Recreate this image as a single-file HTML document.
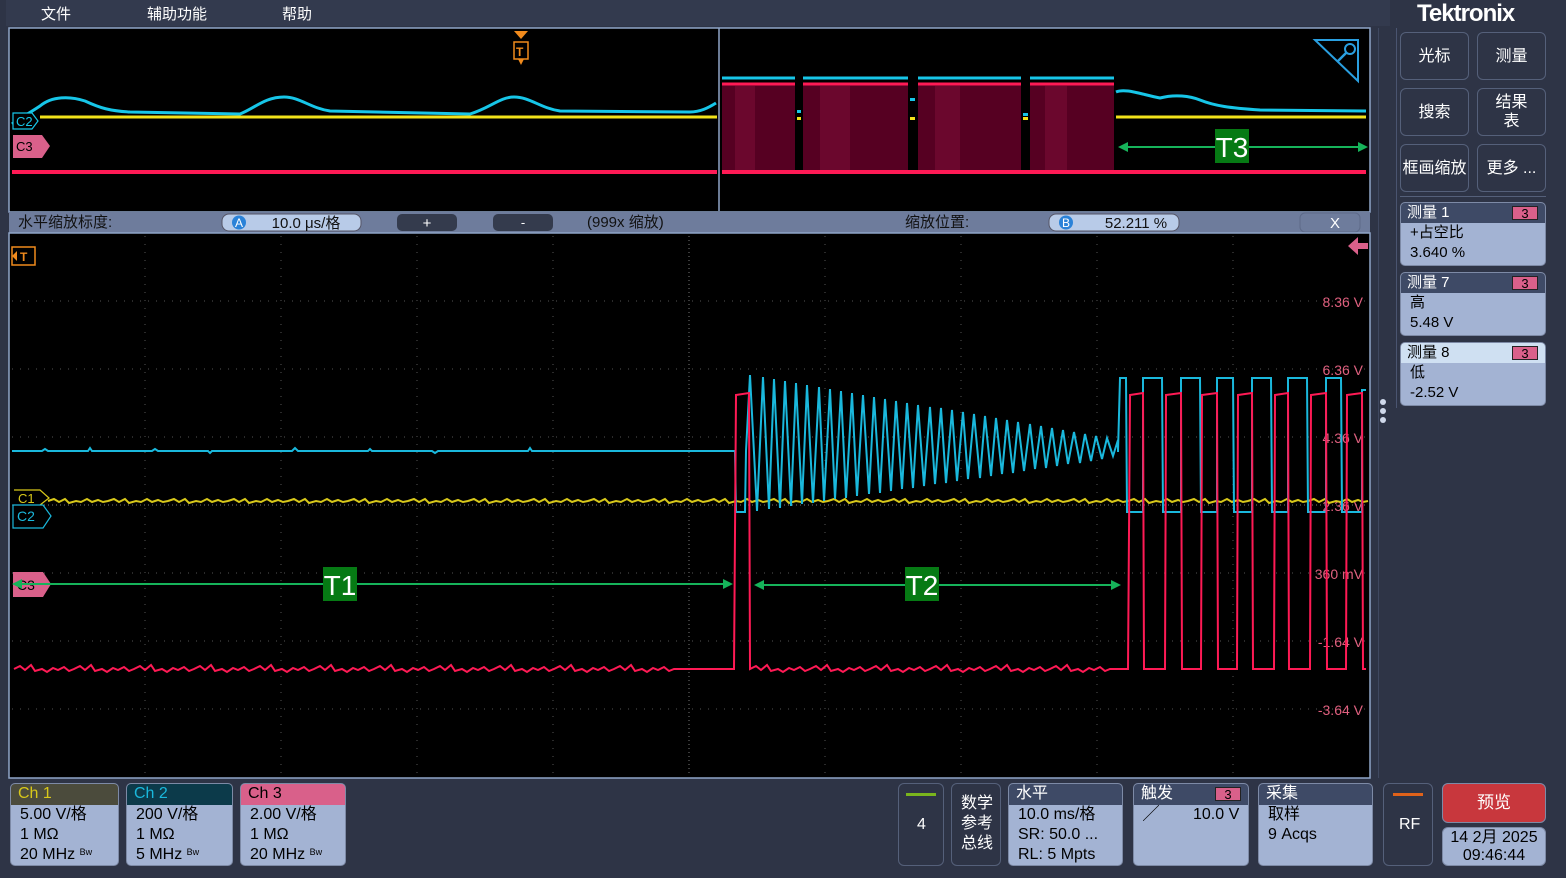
<!DOCTYPE html>
<html><head><meta charset="utf-8"><style>
*{margin:0;padding:0;box-sizing:border-box}
body{width:1566px;height:878px;background:#2e3446;font-family:"Liberation Sans","Noto Sans CJK SC",sans-serif;position:relative;overflow:hidden;color:#fff}
.a{position:absolute}
.menu{font-size:15px;color:#fff;top:3px}
.btn{position:absolute;border:1px solid #55607a;border-radius:6px;background:#2e3446;color:#fff;font-size:16px;display:flex;align-items:center;justify-content:center;text-align:center;line-height:19px}
.card{position:absolute;border:1px solid #7d8aa6;border-radius:5px;background:#a3b3d3;color:#000;overflow:hidden;font-size:15px;line-height:20px}
.card .h{background:#3e4a66;color:#fff;height:20px;padding-left:6px;position:relative}
.badge{position:absolute;right:7px;top:3px;width:26px;height:14px;background:#d9608a;border:1px solid #222;color:#000;font-size:13px;line-height:13px;text-align:center}
.ch{position:absolute;top:783px;height:83px;border:1px solid #7d8aa6;border-radius:5px;background:#a3b3d3;color:#000;font-size:16px;line-height:20px;overflow:hidden}
.ch .h{height:21px;padding-left:7px}
.ch .b{padding-left:9px}
.bw{font-size:9px;line-height:0;vertical-align:4px}
.bb{position:absolute;top:783px;height:83px;border:1px solid #55607a;border-radius:6px;background:#2e3446}
.vl{font-size:14px;fill:#e0607f;text-anchor:end;font-family:"Liberation Sans",sans-serif}
</style></head><body>
<div class="a" style="left:6px;top:0;width:1384px;height:26px;background:#333a4e"></div>
<div class="a menu" style="left:41px">文件</div>
<div class="a menu" style="left:147px">辅助功能</div>
<div class="a menu" style="left:282px">帮助</div>

<svg class="a" style="left:0;top:0" width="1390" height="780" viewBox="0 0 1390 780">
<rect x="9" y="28" width="1361" height="184" fill="#000" stroke="#8fa5c8" stroke-width="1.5"/>
<line x1="719" y1="28" x2="719" y2="211" stroke="#8fa5c8" stroke-width="1.5"/>
<g fill="#560022">
<rect x="722" y="84" width="73" height="88"/><rect x="803" y="84" width="105" height="88"/><rect x="918" y="84" width="103" height="88"/><rect x="1030" y="84" width="84" height="88"/>
</g>
<g fill="#7a0b35" opacity=".6"><rect x="735" y="86" width="20" height="84"/><rect x="820" y="86" width="30" height="84"/><rect x="935" y="86" width="25" height="84"/><rect x="1045" y="86" width="22" height="84"/></g>
<g stroke="#ff1a55" stroke-width="3"><line x1="722" y1="84" x2="795" y2="84"/><line x1="803" y1="84" x2="908" y2="84"/><line x1="918" y1="84" x2="1021" y2="84"/><line x1="1030" y1="84" x2="1114" y2="84"/></g>
<g stroke="#17c6e8" stroke-width="3"><line x1="722" y1="78" x2="795" y2="78"/><line x1="803" y1="78" x2="908" y2="78"/><line x1="918" y1="78" x2="1021" y2="78"/><line x1="1030" y1="78" x2="1114" y2="78"/></g>
<g fill="#17c6e8"><rect x="797" y="110" width="4" height="3"/><rect x="910" y="98" width="5" height="3"/><rect x="1023" y="113" width="5" height="3"/></g>
<g fill="#f2e21a"><rect x="797" y="117" width="4" height="3"/><rect x="910" y="117" width="5" height="3"/><rect x="1023" y="117" width="5" height="3"/></g>
<path d="M12 124 C20 118 28 114 40 106 C52 96 70 96 85 101 C100 108 110 111 130 112 L240 114 C255 108 265 97 284 97 C300 97 310 108 330 111 L470 114 C490 108 500 97 514 97 C530 97 540 108 560 111 L690 112 C700 112 708 108 716 103" stroke="#17c6e8" stroke-width="3" fill="none"/>
<path d="M1116 92 C1125 88 1140 94 1160 98 C1175 94 1190 96 1200 100 C1215 106 1230 108 1260 110 L1366 111" stroke="#17c6e8" stroke-width="3" fill="none"/>
<line x1="40" y1="117" x2="717" y2="117" stroke="#f2e21a" stroke-width="3"/>
<line x1="1116" y1="117" x2="1366" y2="117" stroke="#f2e21a" stroke-width="3"/>
<line x1="12" y1="172" x2="717" y2="172" stroke="#ff1a55" stroke-width="4"/>
<line x1="722" y1="172" x2="1366" y2="172" stroke="#ff1a55" stroke-width="4"/>
<path d="M13 113 L32 113 L38 121 L32 129 L13 129 Z" fill="#000" stroke="#17c6e8" stroke-width="1.2"/>
<text x="16" y="126" font-size="13" fill="#17c6e8">C2</text>
<path d="M13 135 L42 135 L50 146 L42 158 L13 158 Z" fill="#d9608a"/>
<text x="16" y="151" font-size="13" fill="#000">C3</text>
<path d="M514 31 L528 31 L521 39 Z" fill="#f08a1c"/>
<rect x="514" y="42" width="14" height="17" fill="none" stroke="#f08a1c" stroke-width="1.5"/>
<path d="M518 59 L521 65 L524 59" fill="#f08a1c"/>
<text x="516" y="56" font-size="12" fill="#f08a1c" font-weight="bold">T</text>
<path d="M1315 40 L1358 40 L1358 81 Z" fill="none" stroke="#2a9fe0" stroke-width="2"/>
<circle cx="1350" cy="49" r="5" fill="none" stroke="#2a9fe0" stroke-width="2"/><line x1="1346" y1="53" x2="1337" y2="62" stroke="#2a9fe0" stroke-width="2.5"/>
<line x1="1120" y1="147" x2="1366" y2="147" stroke="#16b35a" stroke-width="2"/>
<path d="M1118 147 L1128 142 L1128 152Z M1368 147 L1358 142 L1358 152Z" fill="#16b35a"/>
<rect x="1215" y="129" width="34" height="34" fill="#067a14"/>
<text x="1232" y="157" font-size="28" fill="#fff" text-anchor="middle">T3</text>

<rect x="9" y="212" width="1361" height="21" fill="#6e7c9c"/>
<text x="18" y="227" font-size="15" fill="#111">水平缩放标度:</text>
<rect x="222" y="214" width="139" height="17" rx="7" fill="#b8cbe8" stroke="#556"/>
<circle cx="239" cy="222.5" r="7" fill="#2a82d8"/><text x="239" y="227" font-size="12" fill="#fff" text-anchor="middle">A</text>
<text x="306" y="228" font-size="15" fill="#111" text-anchor="middle">10.0 μs/格</text>
<rect x="397" y="214" width="60" height="17" rx="5" fill="#343b4d"/><text x="427" y="228" font-size="15" fill="#fff" text-anchor="middle">+</text>
<rect x="493" y="214" width="60" height="17" rx="5" fill="#343b4d"/><text x="523" y="227" font-size="13" fill="#fff" text-anchor="middle">-</text>
<text x="587" y="227" font-size="15" fill="#111">(999x 缩放)</text>
<text x="905" y="227" font-size="15" fill="#111">缩放位置:</text>
<rect x="1049" y="214" width="130" height="17" rx="7" fill="#b8cbe8" stroke="#556"/>
<circle cx="1066" cy="222.5" r="7" fill="#2a82d8"/><text x="1066" y="227" font-size="12" fill="#fff" text-anchor="middle">B</text>
<text x="1136" y="228" font-size="15" fill="#111" text-anchor="middle">52.211 %</text>
<rect x="1300" y="213" width="60" height="19" rx="5" fill="none" stroke="#5d6a88"/><text x="1335" y="228" font-size="15" fill="#fff" text-anchor="middle">X</text>

<rect x="9" y="233" width="1361" height="545" fill="#000" stroke="#8fa5c8" stroke-width="1.5"/>
<g stroke="#555" stroke-width="1" stroke-dasharray="1 7">
<line x1="145" y1="236" x2="145" y2="776"/><line x1="281" y1="236" x2="281" y2="776"/><line x1="417" y1="236" x2="417" y2="776"/><line x1="553" y1="236" x2="553" y2="776"/><line x1="825" y1="236" x2="825" y2="776"/><line x1="961" y1="236" x2="961" y2="776"/><line x1="1097" y1="236" x2="1097" y2="776"/><line x1="1233" y1="236" x2="1233" y2="776"/>
<line x1="12" y1="301" x2="1368" y2="301"/><line x1="12" y1="369" x2="1368" y2="369"/><line x1="12" y1="437" x2="1368" y2="437"/><line x1="12" y1="573" x2="1368" y2="573"/><line x1="12" y1="641" x2="1368" y2="641"/><line x1="12" y1="709" x2="1368" y2="709"/>
</g>
<g stroke="#777" stroke-width="1" stroke-dasharray="1 3"><line x1="689" y1="236" x2="689" y2="776"/><line x1="12" y1="505" x2="1368" y2="505"/></g>
<text class="vl" x="1363" y="307">8.36 V</text><text class="vl" x="1363" y="375">6.36 V</text><text class="vl" x="1363" y="443">4.36 V</text><text class="vl" x="1363" y="511">2.36 V</text><text class="vl" x="1363" y="579">360 mV</text><text class="vl" x="1363" y="647">-1.64 V</text><text class="vl" x="1363" y="715">-3.64 V</text>

<path d="M48 501 l6,-2 l5,3 l6,-3 l4,4 l7,-2 l5,1 l6,-3 l5,3 l6,-2 l5,2 l5,-1 M108 501 l6,-2 l5,3 l6,-3 l4,4 l7,-2 l5,1 l6,-3 l5,3 l6,-2 l5,2 l5,-1 M168 501 l6,-2 l5,3 l6,-3 l4,4 l7,-2 l5,1 l6,-3 l5,3 l6,-2 l5,2 l5,-1 M228 501 l6,-2 l5,3 l6,-3 l4,4 l7,-2 l5,1 l6,-3 l5,3 l6,-2 l5,2 l5,-1 M288 501 l6,-2 l5,3 l6,-3 l4,4 l7,-2 l5,1 l6,-3 l5,3 l6,-2 l5,2 l5,-1 M348 501 l6,-2 l5,3 l6,-3 l4,4 l7,-2 l5,1 l6,-3 l5,3 l6,-2 l5,2 l5,-1 M408 501 l6,-2 l5,3 l6,-3 l4,4 l7,-2 l5,1 l6,-3 l5,3 l6,-2 l5,2 l5,-1 M468 501 l6,-2 l5,3 l6,-3 l4,4 l7,-2 l5,1 l6,-3 l5,3 l6,-2 l5,2 l5,-1 M528 501 l6,-2 l5,3 l6,-3 l4,4 l7,-2 l5,1 l6,-3 l5,3 l6,-2 l5,2 l5,-1 M588 501 l6,-2 l5,3 l6,-3 l4,4 l7,-2 l5,1 l6,-3 l5,3 l6,-2 l5,2 l5,-1 M648 501 l6,-2 l5,3 l6,-3 l4,4 l7,-2 l5,1 l6,-3 l5,3 l6,-2 l5,2 l5,-1 M708 501 l6,-2 l5,3 l6,-3 l4,4 l7,-2 l5,1 l6,-3 l5,3 l6,-2 l5,2 l5,-1 M768 501 l6,-2 l5,3 l6,-3 l4,4 l7,-2 l5,1 l6,-3 l5,3 l6,-2 l5,2 l5,-1 M828 501 l6,-2 l5,3 l6,-3 l4,4 l7,-2 l5,1 l6,-3 l5,3 l6,-2 l5,2 l5,-1 M888 501 l6,-2 l5,3 l6,-3 l4,4 l7,-2 l5,1 l6,-3 l5,3 l6,-2 l5,2 l5,-1 M948 501 l6,-2 l5,3 l6,-3 l4,4 l7,-2 l5,1 l6,-3 l5,3 l6,-2 l5,2 l5,-1 M1008 501 l6,-2 l5,3 l6,-3 l4,4 l7,-2 l5,1 l6,-3 l5,3 l6,-2 l5,2 l5,-1 M1068 501 l6,-2 l5,3 l6,-3 l4,4 l7,-2 l5,1 l6,-3 l5,3 l6,-2 l5,2 l5,-1 M1128 501 l6,-2 l5,3 l6,-3 l4,4 l7,-2 l5,1 l6,-3 l5,3 l6,-2 l5,2 l5,-1 M1188 501 l6,-2 l5,3 l6,-3 l4,4 l7,-2 l5,1 l6,-3 l5,3 l6,-2 l5,2 l5,-1 M1248 501 l6,-2 l5,3 l6,-3 l4,4 l7,-2 l5,1 l6,-3 l5,3 l6,-2 l5,2 l5,-1 M1308 501 l6,-2 l5,3 l6,-3 l4,4 l7,-2 l5,1 l6,-3 l5,3 l6,-2 l5,2 l5,-1" stroke="#d8c81a" stroke-width="2" fill="none"/>
<path d="M12 451 l30,0 l3,-2 l3,2 l40,0 l2,-3 l2,3 l60,0 l3,-2 l3,2 l50,0 l2,2 l2,-2 l80,0 l3,-3 l3,3 l70,0 l2,-2 l2,2 l60,0 l3,2 l3,-2 l90,0 l2,-3 l2,3 l100,0 L733 451 L735 451 L736 512 L745 512 L746 451 L750 375 L757 511 L763 377 L769 509 L774 379 L780 508 L785 381 L791 506 L796 383 L802 504 L807 385 L813 503 L819 387 L824 501 L830 389 L835 499 L841 391 L846 498 L852 393 L857 496 L863 395 L869 494 L874 397 L880 493 L885 399 L891 491 L896 401 L902 489 L907 403 L913 488 L918 405 L924 486 L930 407 L935 484 L941 408 L946 483 L952 410 L957 481 L963 412 L968 479 L974 414 L980 478 L985 416 L991 476 L996 418 L1002 474 L1007 420 L1013 473 L1018 422 L1024 471 L1030 424 L1035 469 L1041 426 L1046 468 L1052 428 L1057 466 L1063 430 L1068 464 L1074 432 L1080 463 L1085 434 L1091 461 L1096 436 L1102 459 L1107 438 L1113 456 L1118 440 L1118 452 L1120 378 L1126 378 L1127 512 L1143 512 L1143 378 L1162 378 L1163 512 L1181 512 L1181 378 L1200 378 L1201 512 L1217 512 L1217 378 L1233 378 L1234 512 L1252 512 L1252 378 L1271 378 L1272 512 L1288 512 L1288 378 L1307 378 L1308 512 L1326 512 L1326 378 L1341 378 L1342 512 L1362 512 L1362 390 L1366 390" stroke="#1ab8dc" stroke-width="2" fill="none"/>
<path d="M14 669 l6,-3 l5,4 l6,-5 l4,6 l7,-2 l5,3 l6,-4 l5,2 l6,-3 l5,4 l5,-2 l6,-3 l5,4 l6,-5 l4,6 l7,-2 l5,3 l6,-4 l5,2 l6,-3 l5,4 l5,-2 l6,-3 l5,4 l6,-5 l4,6 l7,-2 l5,3 l6,-4 l5,2 l6,-3 l5,4 l5,-2 l6,-3 l5,4 l6,-5 l4,6 l7,-2 l5,3 l6,-4 l5,2 l6,-3 l5,4 l5,-2 l6,-3 l5,4 l6,-5 l4,6 l7,-2 l5,3 l6,-4 l5,2 l6,-3 l5,4 l5,-2 l6,-3 l5,4 l6,-5 l4,6 l7,-2 l5,3 l6,-4 l5,2 l6,-3 l5,4 l5,-2 l6,-3 l5,4 l6,-5 l4,6 l7,-2 l5,3 l6,-4 l5,2 l6,-3 l5,4 l5,-2 l6,-3 l5,4 l6,-5 l4,6 l7,-2 l5,3 l6,-4 l5,2 l6,-3 l5,4 l5,-2 l6,-3 l5,4 l6,-5 l4,6 l7,-2 l5,3 l6,-4 l5,2 l6,-3 l5,4 l5,-2 l6,-3 l5,4 l6,-5 l4,6 l7,-2 l5,3 l6,-4 l5,2 l6,-3 l5,4 l5,-2 l6,-3 l5,4 l6,-5 l4,6 l7,-2 l5,3 l6,-4 l5,2 l6,-3 l5,4 l5,-2 L734 669 L736 395 L749 393 L750 669 l6,-3 l5,4 l6,-5 l4,6 l7,-2 l5,3 l6,-4 l5,2 l6,-3 l5,4 l5,-2 l6,-3 l5,4 l6,-5 l4,6 l7,-2 l5,3 l6,-4 l5,2 l6,-3 l5,4 l5,-2 l6,-3 l5,4 l6,-5 l4,6 l7,-2 l5,3 l6,-4 l5,2 l6,-3 l5,4 l5,-2 l6,-3 l5,4 l6,-5 l4,6 l7,-2 l5,3 l6,-4 l5,2 l6,-3 l5,4 l5,-2 l6,-3 l5,4 l6,-5 l4,6 l7,-2 l5,3 l6,-4 l5,2 l6,-3 l5,4 l5,-2 l6,-3 l5,4 l6,-5 l4,6 l7,-2 l5,3 l6,-4 l5,2 l6,-3 l5,4 l5,-2 L1128 669 L1130 395 L1143 393 L1144 669 L1165 669 L1166 395 L1181 393 L1182 669 L1201 669 L1202 395 L1217 393 L1218 669 L1237 669 L1238 395 L1252 393 L1253 669 L1274 669 L1275 395 L1288 393 L1289 669 L1310 669 L1311 395 L1326 393 L1327 669 L1346 669 L1347 395 L1362 393 L1363 669 L1366 669" stroke="#ff1a55" stroke-width="2" fill="none"/>
<rect x="12" y="247" width="23" height="18" fill="none" stroke="#f08a1c" stroke-width="1.5"/>
<path d="M12 256 L17 251 L17 261Z" fill="#f08a1c"/>
<text x="20" y="261" font-size="12" fill="#f08a1c" font-weight="bold">T</text>
<path d="M14 490 L40 490 L49 498 L40 505" fill="none" stroke="#d8c81a" stroke-width="1.2"/>
<text x="18" y="503" font-size="13" fill="#d8c81a">C1</text>
<path d="M13 505 L43 505 L51 516 L43 528 L13 528 Z" fill="#000" stroke="#1ab8dc" stroke-width="1.2"/>
<text x="17" y="521" font-size="14" fill="#1ab8dc">C2</text>
<path d="M13 572 L43 572 L51 584 L43 597 L13 597 Z" fill="#d9608a"/>
<text x="17" y="590" font-size="14" fill="#000">C3</text>
<path d="M1348 246 L1358 237 L1358 243 L1368 243 L1368 249 L1358 249 L1358 255Z" fill="#d9608a"/>
<g stroke="#16b35a" stroke-width="2"><line x1="14" y1="584" x2="731" y2="584"/><line x1="756" y1="585" x2="1119" y2="585"/></g>
<path d="M12 584 L22 579 L22 589Z M733 584 L723 579 L723 589Z M754 585 L764 580 L764 590Z M1121 585 L1111 580 L1111 590Z" fill="#16b35a"/>
<rect x="323" y="567" width="34" height="34" fill="#067a14"/><text x="340" y="595" font-size="28" fill="#fff" text-anchor="middle">T1</text>
<rect x="905" y="567" width="34" height="34" fill="#067a14"/><text x="922" y="595" font-size="28" fill="#fff" text-anchor="middle">T2</text>
</svg>

<div class="a" style="left:1378px;top:28px;width:1px;height:750px;background:#3f4860"></div>
<div class="a" style="left:1396px;top:28px;width:1px;height:380px;background:#4a5470"></div>
<div class="a" style="left:1417px;top:0px;font-size:24px;font-weight:bold;color:#fff;letter-spacing:-1px">Tektronix</div>
<div class="btn" style="left:1400px;top:32px;width:69px;height:48px">光标</div>
<div class="btn" style="left:1477px;top:32px;width:69px;height:48px">测量</div>
<div class="btn" style="left:1400px;top:88px;width:69px;height:48px">搜索</div>
<div class="btn" style="left:1477px;top:88px;width:69px;height:48px">结果<br>表</div>
<div class="btn" style="left:1400px;top:144px;width:69px;height:48px">框画缩放</div>
<div class="btn" style="left:1477px;top:144px;width:69px;height:48px">更多 ...</div>
<div class="a" style="left:1400px;top:196px;width:146px;height:1px;background:#55607a"></div>
<div class="card" style="left:1400px;top:202px;width:146px;height:64px"><div class="h">测量 1<span class="badge">3</span></div><div style="padding-left:9px">+占空比<br>3.640 %</div></div>
<div class="card" style="left:1400px;top:272px;width:146px;height:64px"><div class="h">测量 7<span class="badge">3</span></div><div style="padding-left:9px">高<br>5.48 V</div></div>
<div class="card" style="left:1400px;top:342px;width:146px;height:64px"><div class="h" style="background:#cfe0f2;color:#000">测量 8<span class="badge">3</span></div><div style="padding-left:9px">低<br>-2.52 V</div></div>
<div class="a" style="left:1380px;top:399px;width:6px;height:6px;border-radius:3px;background:#cfd8ea"></div>
<div class="a" style="left:1380px;top:408px;width:6px;height:6px;border-radius:3px;background:#cfd8ea"></div>
<div class="a" style="left:1380px;top:417px;width:6px;height:6px;border-radius:3px;background:#cfd8ea"></div>

<div class="ch" style="left:10px;width:109px"><div class="h" style="background:#4b4b3c;color:#d8c81a">Ch 1</div><div class="b">5.00 V/格<br>1 MΩ<br>20 MHz <span class="bw">Bw</span></div></div>
<div class="ch" style="left:126px;width:107px"><div class="h" style="background:#0c3a4a;color:#1ab8dc">Ch 2</div><div class="b">200 V/格<br>1 MΩ<br>5 MHz <span class="bw">Bw</span></div></div>
<div class="ch" style="left:240px;width:106px"><div class="h" style="background:#d9608a;color:#000">Ch 3</div><div class="b">2.00 V/格<br>1 MΩ<br>20 MHz <span class="bw">Bw</span></div></div>

<div class="bb" style="left:898px;width:46px"><div class="a" style="left:7px;top:9px;width:30px;height:3px;background:#7ab51d"></div><div class="a" style="left:18px;top:32px;font-size:16px">4</div></div>
<div class="bb" style="left:951px;width:50px"><div class="a" style="left:9px;top:10px;font-size:16px;line-height:20px">数学<br>参考<br>总线</div></div>
<div class="ch" style="left:1008px;width:115px"><div class="h" style="background:#3e4a66;color:#fff">水平</div><div class="b">10.0 ms/格<br>SR: 50.0 ...<br>RL: 5 Mpts</div></div>
<div class="ch" style="left:1133px;width:116px;background:#a3b3d3"><div class="h" style="background:#3e4a66;color:#fff;position:relative">触发<span class="badge" style="top:3px">3</span></div><div class="b" style="position:relative">╱<span style="position:absolute;left:59px">10.0 V</span></div></div>
<div class="ch" style="left:1258px;width:115px"><div class="h" style="background:#3e4a66;color:#fff">采集</div><div class="b">取样<br>9 Acqs</div></div>
<div class="bb" style="left:1383px;width:50px"><div class="a" style="left:9px;top:9px;width:30px;height:3px;background:#e0621a"></div><div class="a" style="left:15px;top:32px;font-size:16px">RF</div></div>
<div class="a" style="left:1442px;top:783px;width:104px;height:40px;background:#c8373d;border-radius:6px;border:1px solid #7d8aa6;font-size:17px;text-align:center;line-height:38px">预览</div>
<div class="a" style="left:1442px;top:827px;width:104px;height:39px;background:#a3b3d3;border-radius:6px;border:1px solid #7d8aa6;color:#000;font-size:16px;text-align:center;line-height:18px;padding-top:1px">14 2月 2025<br>09:46:44</div>
</body></html>
